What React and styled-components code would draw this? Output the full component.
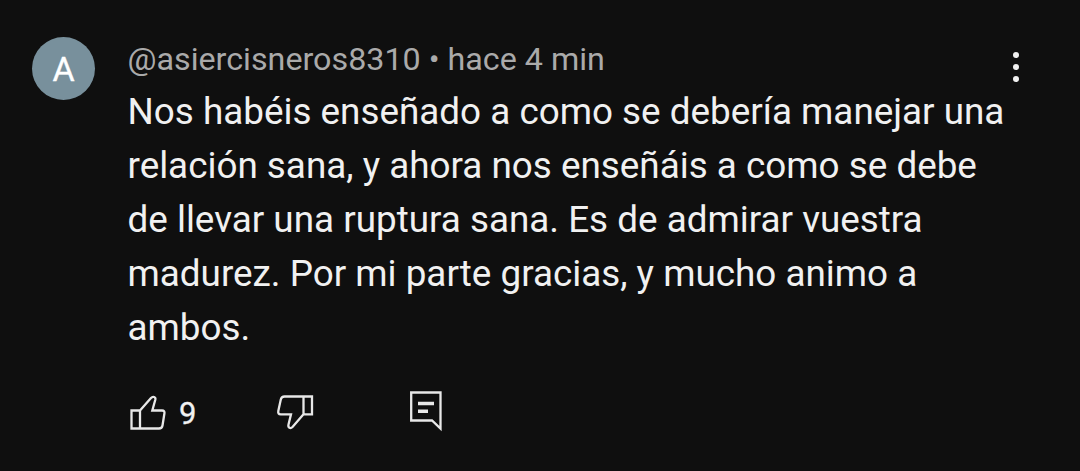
import React from 'react'
import styled, { createGlobalStyle } from 'styled-components'

const lines = [
  'Nos habéis enseñado a como se debería manejar una',
  'relación sana, y ahora nos enseñáis a como se debe',
  'de llevar una ruptura sana. Es de admirar vuestra',
  'madurez. Por mi parte gracias, y mucho animo a',
  'ambos.',
]

const LikeIcon = () => (
  <svg width="37" height="40" viewBox="0 0 37 40">
    <path d="M2.500 20.500H11V38.500H2.500ZM11 20.500L22 8C24 5.800 27 7 26.300 9.800L23.300 20.500H33Q36 20.500 35.400 23.500L33.500 35.500Q33 38.500 30 38.500H11" />
  </svg>
)

const DislikeIcon = () => (
  <svg width="38" height="40" viewBox="0 0 38 40">
    <path d="M27.500 6.500H36V24.300H27.500ZM27.500 6.500H8.500Q5.500 6.500 4.800 9.500L2.300 21Q1.700 24.300 4.700 24.300H15L12.500 34.500C11.700 38 14.500 39 16.500 37L27.500 24.300" />
  </svg>
)

const ReplyIcon = () => (
  <svg width="34" height="42" viewBox="0 0 34 42">
    <path d="M2.200 2.500H31.500V38.500L23 30.500H2.200Z" />
    <path d="M9 13.500H25M9 21.300H19" strokeWidth="3.500" />
  </svg>
)

const App = () => {
  return (
    <>
      <GlobalStyle />
      <Comment>
        <Avatar>A</Avatar>
        <Content>
          <Meta>@asiercisneros8310 • hace 4 min</Meta>
          <Message>
            {lines.map((line) => (
              <span key={line}>{line}</span>
            ))}
          </Message>
          <Actions>
            <Action $width={147} aria-label="Me gusta"><LikeIcon /><Count>9</Count></Action>
            <Action $width={133} aria-label="No me gusta"><DislikeIcon /></Action>
            <Action $width={34} aria-label="Responder"><ReplyIcon /></Action>
          </Actions>
        </Content>
        <Menu aria-label="Más opciones"><i /><i /><i /></Menu>
      </Comment>
    </>
  )
}

export default App

const GlobalStyle = createGlobalStyle`
  body{
    margin: 0;
    background-color: #0f0f0f;
  }
`
const Comment = styled.article`
  display: flex;
  box-sizing: border-box;
  width: 1080px;
  height: 471px;
  padding: 37px 61px 0 32px;
  font-family: Roboto, sans-serif;
  color: #f1f1f1;
`
const Avatar = styled.div`
  display: flex;
  align-items: center;
  justify-content: center;
  flex: none;
  box-sizing: border-box;
  width: 63px;
  height: 63px;
  padding-top: 1px;
  border-radius: 50%;
  background-color: #78909c;
  color: #fff;
  font-size: 34px;
  -webkit-text-stroke: 0.3px #fff;
`
const Content = styled.div`
  flex: 1;
  min-width: 0;
  margin-left: 32.5px;
`
const Meta = styled.div`
  height: 48px;
  line-height: 44px;
  font-size: 32.25px;
  color: #aaa;
`
const Message = styled.div`
  font-size: 36.85px;
  line-height: 54px;
  span{
    display: block;
    white-space: nowrap;
  }
`
const Actions = styled.div`
  display: flex;
  align-items: flex-start;
  margin-top: 35px;
  padding-left: 1.5px;
`
const Action = styled.button`
  display: flex;
  flex: none;
  width: ${(props) => props.$width}px;
  padding: 0;
  border: none;
  background: none;
  color: #f1f1f1;
  font-family: inherit;
  svg{
    flex: none;
    fill: none;
    stroke: #e8e8e8;
    stroke-width: 2.3;
  }
`
const Count = styled.span`
  margin: 4px 0 0 13px;
  line-height: 40px;
  font-size: 31px;
  -webkit-text-stroke: 0.3px #f1f1f1;
`
const Menu = styled.button`
  display: flex;
  flex-direction: column;
  gap: 6px;
  flex: none;
  height: 32px;
  margin-top: 15px;
  padding: 0;
  border: none;
  background: none;
  i{
    width: 6px;
    height: 6px;
    border-radius: 50%;
    background-color: #f1f1f1;
  }
`
